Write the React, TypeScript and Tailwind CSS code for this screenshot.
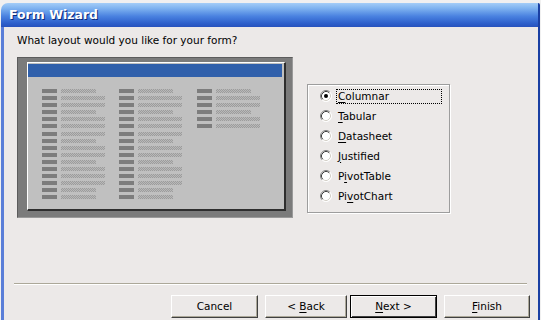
import React from "react";

const S = 35;
const L = 44;
const colA = [S, L, L, S, L, L, L, S, L, L, S, L, L, L, S, S];
const colC = [S, L, L, S, L, L];

function PreviewColumn({ rows, w }: { rows: number[]; w: string }) {
  return (
    <div className={`flex flex-col ${w}`}>
      {rows.map((v, i) => (
        <div key={i} className="h-[7.1px] flex items-start gap-[4px]">
          <div className="w-[15px] h-[4px] bg-[#7d7d7d]" />
          <div
            className="h-[4px] bg-[repeating-conic-gradient(#9c9c9c_0_25%,#b9b9b9_0_50%)] bg-[length:2px_2px]"
            style={{ width: v }}
          />
        </div>
      ))}
    </div>
  );
}

function Radio({ checked }: { checked?: boolean }) {
  return (
    <svg width="12" height="12" viewBox="0 0 12 12" className="shrink-0">
      <circle cx="6" cy="6" r="5.5" fill="#ffffff" />
      <path d="M2.11 9.89 A5.5 5.5 0 0 1 9.89 2.11" stroke="#808080" strokeWidth="1" fill="none" />
      <path d="M9.89 2.11 A5.5 5.5 0 0 1 2.11 9.89" stroke="#ffffff" strokeWidth="1" fill="none" />
      <path d="M2.82 9.18 A4.5 4.5 0 0 1 9.18 2.82" stroke="#404040" strokeWidth="1" fill="none" />
      <path d="M9.18 2.82 A4.5 4.5 0 0 1 2.82 9.18" stroke="#d4d0c8" strokeWidth="1" fill="none" />
      {checked && <circle cx="6" cy="6" r="2" fill="#000000" />}
    </svg>
  );
}

function Opt({
  pre,
  u,
  post,
  checked,
  focus,
}: {
  pre: string;
  u: string;
  post: string;
  checked?: boolean;
  focus?: boolean;
}) {
  return (
    <div className="h-[20px] flex items-center">
      <Radio checked={checked} />
      <span
        className={`ml-[4px] h-[15px] leading-[13px] pl-[1px] ${
          focus ? "border border-dotted border-black w-[106px]" : "border border-transparent"
        }`}
      >
        {pre}
        <span className="underline underline-offset-[2px]">{u}</span>
        {post}
      </span>
    </div>
  );
}

function Btn({
  children,
  w,
  def,
}: {
  children: React.ReactNode;
  w: string;
  def?: boolean;
}) {
  return (
    <div
      className={`${w} h-[23px] flex items-center justify-center bg-[#ece9e8] ${
        def
          ? "border border-black shadow-[inset_1px_1px_0_#ffffff,inset_-1px_-1px_0_#404040]"
          : "border-t border-l border-t-white border-l-white border-r border-b border-r-[#404040] border-b-[#404040] shadow-[inset_-1px_-1px_0_#aca899]"
      }`}
    >
      {children}
    </div>
  );
}

export default function App() {
  return (
    <div className="w-[541px] h-[320px] overflow-hidden bg-[#f0f0f0] flex flex-col pt-[3px] pl-[1px] pr-[1px] font-['DejaVu_Sans',sans-serif] text-[10.5px] text-black">
      <div className="flex-1 flex flex-col">
        <div className="h-[24px] shrink-0 rounded-tl-[7px] rounded-tr-[2px] bg-[linear-gradient(180deg,#a3cdf8_0%,#7fb3f0_22%,#4a82e0_55%,#2d5fcb_85%,#2752bd_100%)] border-r-[2px] border-r-[#1a3fa3] flex items-center pl-[8px]">
          <span className="text-white font-bold text-[12.5px] [text-shadow:1px_1px_0_#0b2a7a]">
            Form Wizard
          </span>
        </div>
        <div className="flex-1 bg-[#ece9e8] border-l-[3px] border-l-[#5a7ed8] border-r-[2px] border-r-[#1a3fa3] flex flex-col">
          <div className="ml-[13px] mt-[7px] h-[13px] leading-[13px]">
            What layout would you like for your form?
          </div>
          <div className="ml-[13px] mt-[10px] flex items-start">
            <div className="w-[276px] h-[161px] shrink-0 bg-[#7b7b7b] border border-t-[#5c5c5c] border-l-[#5c5c5c] border-r-[#9a9a9a] border-b-[#9a9a9a] pl-[9px] pt-[4px] pr-[6px] pb-[6px] flex">
              <div className="flex-1 bg-[#c0c0c0] border-t border-l border-t-white border-l-white border-r-2 border-b-2 border-r-[#2e2e2e] border-b-[#2e2e2e] flex flex-col pt-[1px] pr-[2px]">
                <div className="h-[13px] bg-[#3060ab]" />
                <div className="mt-[12px] pl-[14px] flex">
                  <PreviewColumn rows={colA} w="w-[77px]" />
                  <PreviewColumn rows={colA} w="w-[78px]" />
                  <PreviewColumn rows={colC} w="w-[77px]" />
                </div>
              </div>
            </div>
            <div className="ml-[14px] mt-[27px] w-[143px] h-[129px] border border-[#9d9d9d] shadow-[inset_1px_1px_0_#ffffff,1px_1px_0_#ffffff] pl-[12px] pt-[1px] flex flex-col">
              <Opt pre="" u="C" post="olumnar" checked focus />
              <Opt pre="" u="T" post="abular" />
              <Opt pre="" u="D" post="atasheet" />
              <Opt pre="" u="J" post="ustified" />
              <Opt pre="P" u="i" post="votTable" />
              <Opt pre="Pi" u="v" post="otChart" />
            </div>
          </div>
          <div className="ml-[10px] mt-[65px] w-[513px] h-[2px] border-t border-t-[#aca899] border-b border-b-white" />
          <div className="mt-[10px] ml-[167px] flex">
            <Btn w="w-[87px]">Cancel</Btn>
            <div className="ml-[7px]">
              <Btn w="w-[82px]">
                <span>
                  &lt; <span className="underline underline-offset-[2px]">B</span>ack
                </span>
              </Btn>
            </div>
            <div className="ml-[3px]">
              <Btn w="w-[87px]" def>
                <span>
                  <span className="underline underline-offset-[2px]">N</span>ext &gt;
                </span>
              </Btn>
            </div>
            <div className="ml-[7px]">
              <Btn w="w-[86px]">
                <span>
                  <span className="underline underline-offset-[2px]">F</span>inish
                </span>
              </Btn>
            </div>
          </div>
        </div>
      </div>
    </div>
  );
}
